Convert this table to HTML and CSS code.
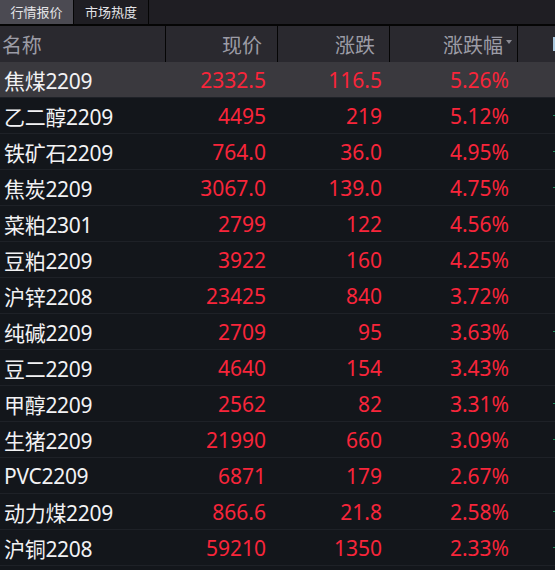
FILE: index.html
```html
<!DOCTYPE html>
<html lang="zh">
<head>
<meta charset="utf-8">
<link rel="stylesheet" href="styles.css">
</head>
<body>
<div class="tabs">
  <div class="tab active">行情报价</div>
  <div class="tab">市场热度</div>
</div>
<div class="table">
  <div class="row head">
    <div class="c name">名称</div>
    <div class="c price">现价</div>
    <div class="c chg">涨跌</div>
    <div class="c pct">涨跌幅<span class="sort"></span></div>
    <div class="c extra"><span class="mark"></span></div>
  </div>
  <div class="row sel"><div class="c name">焦煤2209</div><div class="c price">2332.5</div><div class="c chg">116.5</div><div class="c pct">5.26%</div><div class="c extra"></div></div>
  <div class="row"><div class="c name">乙二醇2209</div><div class="c price">4495</div><div class="c chg">219</div><div class="c pct">5.12%</div><div class="c extra"><span class="g"></span></div></div>
  <div class="row"><div class="c name">铁矿石2209</div><div class="c price">764.0</div><div class="c chg">36.0</div><div class="c pct">4.95%</div><div class="c extra"><span class="g"></span></div></div>
  <div class="row"><div class="c name">焦炭2209</div><div class="c price">3067.0</div><div class="c chg">139.0</div><div class="c pct">4.75%</div><div class="c extra"><span class="g"></span></div></div>
  <div class="row"><div class="c name">菜粕2301</div><div class="c price">2799</div><div class="c chg">122</div><div class="c pct">4.56%</div><div class="c extra"></div></div>
  <div class="row"><div class="c name">豆粕2209</div><div class="c price">3922</div><div class="c chg">160</div><div class="c pct">4.25%</div><div class="c extra"></div></div>
  <div class="row"><div class="c name">沪锌2208</div><div class="c price">23425</div><div class="c chg">840</div><div class="c pct">3.72%</div><div class="c extra"></div></div>
  <div class="row"><div class="c name">纯碱2209</div><div class="c price">2709</div><div class="c chg">95</div><div class="c pct">3.63%</div><div class="c extra"><span class="g"></span></div></div>
  <div class="row"><div class="c name">豆二2209</div><div class="c price">4640</div><div class="c chg">154</div><div class="c pct">3.43%</div><div class="c extra"></div></div>
  <div class="row"><div class="c name">甲醇2209</div><div class="c price">2562</div><div class="c chg">82</div><div class="c pct">3.31%</div><div class="c extra"><span class="g"></span></div></div>
  <div class="row"><div class="c name">生猪2209</div><div class="c price">21990</div><div class="c chg">660</div><div class="c pct">3.09%</div><div class="c extra"><span class="g"></span></div></div>
  <div class="row"><div class="c name">PVC2209</div><div class="c price">6871</div><div class="c chg">179</div><div class="c pct">2.67%</div><div class="c extra"></div></div>
  <div class="row"><div class="c name">动力煤2209</div><div class="c price">866.6</div><div class="c chg">21.8</div><div class="c pct">2.58%</div><div class="c extra"><span class="g"></span></div></div>
  <div class="row"><div class="c name">沪铜2208</div><div class="c price">59210</div><div class="c chg">1350</div><div class="c pct">2.33%</div><div class="c extra"><span class="g"></span></div></div>
</div>
</body>
</html>
```
FILE: styles.css
```css
html, body {
  margin: 0;
  padding: 0;
  background: #13161b;
  overflow: hidden;
  width: 555px;
  height: 570px;
}
body {
  font-family: "Noto Sans", "Noto Sans CJK SC", sans-serif;
}
.tabs {
  display: flex;
  height: 24px;
  background: #1f1e23;
  border-bottom: 2px solid #050505;
}
.tab {
  width: 74px;
  font-size: 13px;
  line-height: 24px;
  text-align: center;
  color: #e4e4e8;
  border-right: 1px solid #050505;
  font-family: "Noto Sans CJK SC", sans-serif;
}
.tab.active {
  width: 73px;
  background: #4b4a52;
}
.table {
  display: flex;
  flex-direction: column;
  width: 555px;
}
.row {
  display: grid;
  grid-template-columns: 166px 112px 112px 128px 37px;
  height: 35px;
  border-bottom: 1px solid #1e2127;
  font-size: 21px;
  color: #f2f2f4;
  align-items: center;
}
.row.head {
  height: 36px;
  border-bottom: none;
  background: #2a292f;
  color: #9c9ca6;
  align-items: stretch;
  font-size: 20px;
}
.row.head .c {
  display: flex;
  align-items: center;
  justify-content: flex-end;
  border-right: 1px solid #050505;
  font-family: "Noto Sans CJK SC", sans-serif;
}
.row.head .c.name {
  justify-content: flex-start;
  padding-left: 2px;
}
.row.sel {
  background: #3a393e;
}
.c {
  white-space: nowrap;
  overflow: hidden;
}
.name {
  padding-left: 4px;
  text-align: left;
  letter-spacing: -0.3px;
}
.price, .chg, .pct {
  text-align: right;
  color: #f8253a;
}
.row.head .price { padding-right: 15px; }
.row.head .chg { padding-right: 14px; }
.row.head .pct { padding-right: 5px; }
.row .price { padding-right: 12px; }
.row .chg { padding-right: 8px; }
.row .pct { padding-right: 9px; }
.row.head .price, .row.head .chg, .row.head .pct { color: #9c9ca6; }
.sort {
  display: inline-block;
  width: 0;
  height: 0;
  margin-left: 3px;
  border-left: 3.5px solid transparent;
  border-right: 3.5px solid transparent;
  border-top: 4px solid #8a8a92;
  align-self: center;
  margin-top: -4px;
}
.row.head .extra {
  border-right: none;
  justify-content: flex-start;
  padding-left: 35px;
}
.mark {
  display: block;
  width: 2px;
  height: 14px;
  background: #a8c6dc;
}
.extra {
  padding-left: 35px;
}
.g {
  display: block;
  width: 2px;
  height: 1px;
  background: #1f8a5a;
}
```
